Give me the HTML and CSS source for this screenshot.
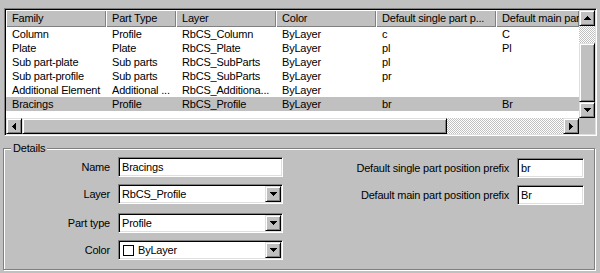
FILE: index.html
```html
<!DOCTYPE html>
<html lang="en">
<head>
    <meta charset="UTF-8">
    <title>Families</title>
    <link rel="stylesheet" href="styles.css">
</head>
<body>
    <div class="list">
        <div class="table">
            <div class="thead">
                <div class="th c1">Family</div>
                <div class="th c2">Part Type</div>
                <div class="th c3">Layer</div>
                <div class="th c4">Color</div>
                <div class="th c5">Default single part p...</div>
                <div class="th c6">Default main par</div>
            </div>
            <div class="tr">
                <div class="td c1">Column</div><div class="td c2">Profile</div><div class="td c3">RbCS_Column</div><div class="td c4">ByLayer</div><div class="td c5">c</div><div class="td c6">C</div>
            </div>
            <div class="tr">
                <div class="td c1">Plate</div><div class="td c2">Plate</div><div class="td c3">RbCS_Plate</div><div class="td c4">ByLayer</div><div class="td c5">pl</div><div class="td c6">Pl</div>
            </div>
            <div class="tr">
                <div class="td c1">Sub part-plate</div><div class="td c2">Sub parts</div><div class="td c3">RbCS_SubParts</div><div class="td c4">ByLayer</div><div class="td c5">pl</div><div class="td c6"></div>
            </div>
            <div class="tr">
                <div class="td c1">Sub part-profile</div><div class="td c2">Sub parts</div><div class="td c3">RbCS_SubParts</div><div class="td c4">ByLayer</div><div class="td c5">pr</div><div class="td c6"></div>
            </div>
            <div class="tr">
                <div class="td c1">Additional Element</div><div class="td c2">Additional ...</div><div class="td c3">RbCS_Additiona...</div><div class="td c4">ByLayer</div><div class="td c5"></div><div class="td c6"></div>
            </div>
            <div class="tr sel">
                <div class="td c1">Bracings</div><div class="td c2">Profile</div><div class="td c3">RbCS_Profile</div><div class="td c4">ByLayer</div><div class="td c5">br</div><div class="td c6">Br</div>
            </div>
        </div>

        <div class="vscroll">
            <div class="btn3d arrow-btn">
                <svg width="7" height="4" viewBox="0 0 7 4"><path d="M3 0h1v1H3zM2 1h3v1H2zM1 2h5v1H1zM0 3h7v1H0z"/></svg>
            </div>
            <div class="track v-gap"></div>
            <div class="btn3d v-thumb"></div>
            <div class="track fill"></div>
            <div class="btn3d arrow-btn">
                <svg width="7" height="4" viewBox="0 0 7 4"><path d="M0 0h7v1H0zM1 1h5v1H1zM2 2h3v1H2zM3 3h1v1H3z"/></svg>
            </div>
        </div>

        <div class="hscroll">
            <div class="btn3d arrow-btn">
                <svg width="4" height="7" viewBox="0 0 4 7"><path d="M0 3h1v1H0zM1 2h1v3H1zM2 1h1v5H2zM3 0h1v7H3z"/></svg>
            </div>
            <div class="btn3d h-thumb"></div>
            <div class="track fill"></div>
            <div class="btn3d arrow-btn">
                <svg width="4" height="7" viewBox="0 0 4 7"><path d="M0 0h1v7H0zM1 1h1v5H1zM2 2h1v3H2zM3 3h1v1H3z"/></svg>
            </div>
        </div>

        <div class="corner"></div>
    </div>

    <fieldset class="details">
        <legend>Details</legend>
        <div class="details-body">
            <div class="form-left">
                <div class="lbl">Name</div>
                <div class="field">Bracings</div>

                <div class="lbl">Layer</div>
                <div class="field combo">
                    <span>RbCS_Profile</span>
                    <div class="btn3d drop">
                        <svg width="7" height="4" viewBox="0 0 7 4"><path d="M0 0h7v1H0zM1 1h5v1H1zM2 2h3v1H2zM3 3h1v1H3z"/></svg>
                    </div>
                </div>

                <div class="lbl">Part type</div>
                <div class="field combo">
                    <span>Profile</span>
                    <div class="btn3d drop">
                        <svg width="7" height="4" viewBox="0 0 7 4"><path d="M0 0h7v1H0zM1 1h5v1H1zM2 2h3v1H2zM3 3h1v1H3z"/></svg>
                    </div>
                </div>

                <div class="lbl">Color</div>
                <div class="field combo">
                    <span class="swatch"></span>
                    <span>ByLayer</span>
                    <div class="btn3d drop">
                        <svg width="7" height="4" viewBox="0 0 7 4"><path d="M0 0h7v1H0zM1 1h5v1H1zM2 2h3v1H2zM3 3h1v1H3z"/></svg>
                    </div>
                </div>
            </div>

            <div class="form-right">
                <div class="lbl">Default single part position prefix</div>
                <div class="field">br</div>

                <div class="lbl">Default main part position prefix</div>
                <div class="field">Br</div>
            </div>
        </div>
    </fieldset>
</body>
</html>
```

FILE: styles.css
```css
* {
    margin: 0;
    padding: 0;
    box-sizing: border-box;
}

body {
    width: 600px;
    height: 273px;
    padding: 8px 3px 0 3px;
    overflow: hidden;
    background: #c0c0c0;
    color: #000;
    font-family: "Liberation Sans", Arial, sans-serif;
    font-size: 11px;
    letter-spacing: -0.2px;
}

/* sunken list view */
.list {
    margin-left: 1px;
    height: 128px;
    padding: 1px;
    border: 1px solid;
    border-color: #808080 #fff #fff #808080;
    box-shadow: inset 1px 1px #000, inset -1px -1px #dfdfdf;
    background: #fff;
    display: grid;
    grid-template-columns: 1fr 16px;
    grid-template-rows: 1fr 16px;
}

.table {
    overflow: hidden;
    background: #fff;
}

.thead {
    display: flex;
    height: 17px;
    background: #c0c0c0;
}

.th {
    flex: none;
    padding-left: 6px;
    line-height: 16px;
    white-space: nowrap;
    overflow: hidden;
    box-shadow: inset 1px 1px #fff, inset -1px -1px #808080;
}

.tr {
    display: flex;
    height: 14px;
    line-height: 14px;
}

.tr.sel {
    background: #c0c0c0;
}

.td {
    flex: none;
    padding-left: 6px;
    white-space: nowrap;
    overflow: hidden;
}

.c1 { width: 100px; }
.c2 { width: 70px; }
.c3 { width: 100px; }
.c4 { width: 100px; }
.c5 { width: 120px; }
.c6 { width: 83px; }

/* scrollbars */
.btn3d {
    background: #c0c0c0;
    border: 1px solid;
    border-color: #dfdfdf #000 #000 #dfdfdf;
    box-shadow: inset 1px 1px #fff, inset -1px -1px #808080;
    display: flex;
    align-items: center;
    justify-content: center;
}

.btn3d svg {
    display: block;
    fill: #000;
}

.arrow-btn {
    flex: none;
    width: 16px;
    height: 16px;
}

.track {
    background: repeating-conic-gradient(#c0c0c0 0 25%, #fff 0 50%) 0 0 / 2px 2px;
}

.fill {
    flex: 1;
}

.vscroll {
    display: flex;
    flex-direction: column;
}

.v-gap {
    height: 17px;
}

.v-thumb {
    height: 59px;
}

.hscroll {
    display: flex;
}

.h-thumb {
    width: 425px;
}

.corner {
    background: #c0c0c0;
}

/* details group */
.details {
    margin: 6px 2px 0 0;
    height: 128px;
    min-inline-size: 0;
    border: 1px solid #808080;
    box-shadow: inset 1px 1px #fff, 1px 1px #fff;
}

.details legend {
    margin-left: 7px;
    padding: 0 2px;
    line-height: 13px;
    background: #c0c0c0;
}

.details-body {
    display: flex;
    align-items: flex-start;
    padding: 2px 10px 0 0;
}

.form-left {
    display: grid;
    grid-template-columns: 106px 165px;
    grid-template-rows: 20px 20px 22px 20px;
    column-gap: 8px;
    row-gap: 7px;
    align-items: end;
}

.form-right {
    margin-left: auto;
    margin-top: 1px;
    display: grid;
    grid-template-columns: auto 67px;
    grid-auto-rows: 20px;
    column-gap: 8px;
    row-gap: 7px;
    align-items: end;
}

.lbl {
    height: 20px;
    line-height: 20px;
    text-align: right;
    white-space: nowrap;
}

.field {
    height: 20px;
    padding: 0 3px;
    background: #fff;
    border: 1px solid;
    border-color: #808080 #fff #fff #808080;
    box-shadow: inset 1px 1px #000, inset -1px -1px #dfdfdf;
    display: flex;
    align-items: center;
    white-space: nowrap;
}

.combo {
    padding-right: 1px;
}

.drop {
    margin-left: auto;
    width: 16px;
    height: 16px;
}

.swatch {
    width: 11px;
    height: 11px;
    margin: 0 4px 0 1px;
    border: 1px solid #000;
    background: #fff;
}
```
